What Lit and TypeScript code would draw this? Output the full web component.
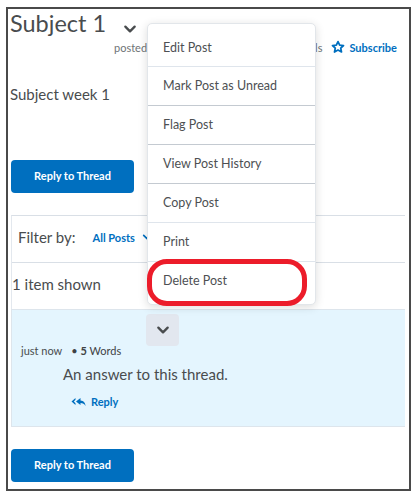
import { LitElement, html, css } from "lit";
import { customElement } from "lit/decorators.js";

const chevron = (w: number, cls = "") => html`<svg class=${cls} width=${w} height=${w} viewBox="0 0 12 12" fill="none" stroke="currentColor" stroke-width="2" stroke-linecap="round" stroke-linejoin="round"><path d="M2 4l4 4 4-4"/></svg>`;

@customElement("app-root")
export class AppRoot extends LitElement {
  static styles = css`
    :host { display: block; width: 416px; height: 499px; overflow: hidden; background: #fff; font-family: Lato, sans-serif; color: #494c4e; }
    * { box-sizing: border-box; }
    .frame { position: relative; margin: 7px 0 0 6px; width: 405px; height: 484px; border: 2px solid #4a4a4a; padding: 0 3px 0 2px; display: flex; flex-direction: column; }
    .title-row { display: flex; align-items: flex-start; height: 28px; }
    h1 { margin: 0; font-size: 23.5px; font-weight: 400; line-height: 28px; color: #494c4e; }
    .title-chev { margin: 13px 0 0 17px; color: #494c4e; }
    .meta { display: flex; align-items: center; height: 20px; font-size: 11px; color: #6e7376; padding-left: 104px; }
    .ls { margin-left: 168px; }
    .sub { display: flex; align-items: center; margin-left: 9px; gap: 4px; color: #006fbf; font-weight: 700; font-size: 11px; }
    .week { margin: 27px 0 0; font-size: 15px; line-height: 20px; }
    button.primary { display: block; border: 0; background: #006fbf; color: #fff; font: 700 11px Lato, sans-serif; width: 123px; height: 33px; border-radius: 4px; padding: 0 0 2px; margin-left: 1px; }
    .top-btn { margin-top: 56px; }
    .panel { margin: 22px 0 0 1px; width: 394px; border-top: 1px solid #d9dfe6; border-left: 1px solid #e3e8ee; }
    .filter { display: flex; align-items: center; height: 47px; border-bottom: 1px solid #d9dfe6; padding: 0 0 4px 6px; font-size: 15px; }
    .filter .all { margin-left: 17px; color: #006fbf; font-weight: 700; font-size: 11px; }
    .filter svg { color: #006fbf; margin-left: 7px; }
    .count { height: 46px; display: flex; align-items: center; font-size: 15px; padding-bottom: 4px; }
    .post { position: relative; height: 118px; margin-left: -1px; background: #e4f5fe; border-top: 1px solid #dde5ec; border-bottom: 1px solid #dde5ec; border-left: 1px solid #dde5ec; padding: 4px 0 0 9px; }
    .more { width: 33px; height: 32px; border-radius: 4px; background: #e2e7ef; display: flex; align-items: center; justify-content: center; margin-left: 125px; color: #494c4e; }
    .stats { display: flex; align-items: center; height: 12px; margin-top: -1px; font-size: 11px; line-height: 12px; gap: 9px; }
    .stats b { font-weight: 400; color: #3f4244; }
    .stats strong { font-weight: 700; }
    .body { margin: 7px 0 0 42px; font-size: 15px; line-height: 20px; }
    .reply { display: flex; align-items: center; gap: 5px; margin: 11px 0 0 50px; color: #006fbf; font-size: 11px; font-weight: 700; line-height: 14px; }
    .bottom-btn { margin-top: 22px; }
    .menu { position: absolute; left: 139px; top: 14px; width: 169px; height: 282px; padding: 4px 0; background: #fff; border: 1px solid #e2e6ea; border-radius: 5px; box-shadow: 0 2px 10px rgba(0,0,0,.14); display: flex; flex-direction: column; }
    .menu div { height: 39px; flex: none; display: flex; align-items: center; padding: 0 0 1px 15px; font-size: 12.5px; color: #4d5053; border-bottom: 1px solid #dfe5ec; }
    .menu div.dark { border-bottom-color: #c4cad1; }
    .menu div:first-child { padding-bottom: 0; }
    .menu div:last-child { border-bottom: 0; padding-bottom: 3px; }
    .ring { position: absolute; left: 139px; top: 250px; width: 160px; height: 47px; border: 5px solid #ec1c2a; border-radius: 20px; }
  `;

  render() {
    const items: [string, boolean][] = [["Edit Post", false], ["Mark Post as Unread", true], ["Flag Post", true], ["View Post History", true], ["Copy Post", false], ["Print", false], ["Delete Post", false]];
    return html`<div class="frame">
      <div class="title-row"><h1>Subject 1</h1>${chevron(14, "title-chev")}</div>
      <div class="meta"><span>posted</span><span class="ls">ls</span>
        <span class="sub"><svg width="14" height="14" viewBox="0 0 16 16" fill="none" stroke="currentColor" stroke-width="2" stroke-linejoin="round"><path d="M8 1.800l1.900 4 4.400.5-3.200 3 .9 4.400L8 11.500l-4 2.200.9-4.400-3.200-3 4.400-.5z"/></svg>Subscribe</span></div>
      <p class="week">Subject week 1</p>
      <button class="primary top-btn">Reply to Thread</button>
      <div class="panel">
        <div class="filter"><span>Filter by:</span><span class="all">All Posts</span>${chevron(10)}</div>
        <div class="count">1 item shown</div>
        <div class="post">
          <div class="more">${chevron(14)}</div>
          <div class="stats"><span>just now</span><b>• <strong>5</strong> Words</b></div>
          <div class="body">An answer to this thread.</div>
          <div class="reply"><svg width="15" height="10" viewBox="0 0 15 10" fill="currentColor"><path d="M4.500 1L0.500 4.500 4.500 8V6.200L2.800 4.500 4.500 2.800z"/><path d="M9.500 1L5 4.500 9.500 8V6c2.400 0 3.800.8 5 3 0-3-1.800-5.400-5-5.500z"/></svg>Reply</div>
        </div>
      </div>
      <button class="primary bottom-btn">Reply to Thread</button>
      <div class="menu">${items.map(([t, d]) => html`<div class=${d ? "dark" : ""}>${t}</div>`)}</div>
      <div class="ring"></div>
    </div>`;
  }
}
